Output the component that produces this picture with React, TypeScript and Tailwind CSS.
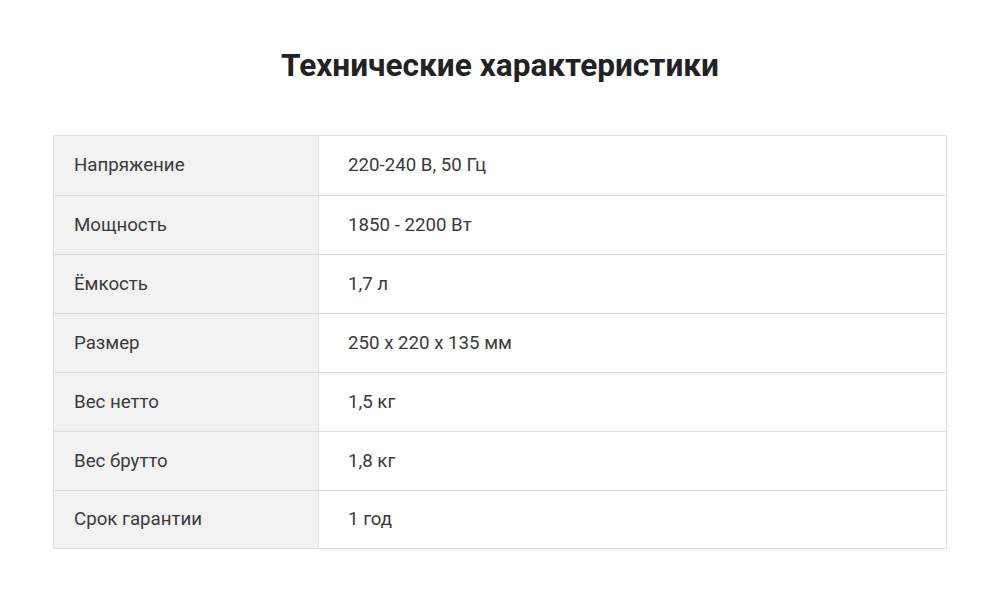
const rows: [string, string][] = [
  ["Напряжение", "220-240 В, 50 Гц"],
  ["Мощность", "1850 - 2200 Вт"],
  ["Ёмкость", "1,7 л"],
  ["Размер", "250 x 220 x 135 мм"],
  ["Вес нетто", "1,5 кг"],
  ["Вес брутто", "1,8 кг"],
  ["Срок гарантии", "1 год"],
];

export default function App() {
  return (
    <div className="w-[1000px] h-[603px] bg-white font-['Roboto',sans-serif] text-[#3a3a3a]">
      <h1 className="pt-[46px] text-center text-[31.6px] leading-[40px] font-bold text-[#222]">
        Технические характеристики
      </h1>
      <div className="mx-[53px] mt-[49px] border border-[#e0e0e0]">
        {rows.map(([label, value], i) => (
          <div
            key={i}
            className="flex h-[59px] border-b border-[#e0e0e0] first:h-[60px] last:border-b-0 last:h-[57px] text-[18.7px]"
          >
            <div className="w-[265px] shrink-0 bg-[#f2f2f2] border-r border-[#e0e0e0] pl-[20px] flex items-center">
              {label}
            </div>
            <div className="flex-1 pl-[29px] flex items-center">{value}</div>
          </div>
        ))}
      </div>
    </div>
  );
}
